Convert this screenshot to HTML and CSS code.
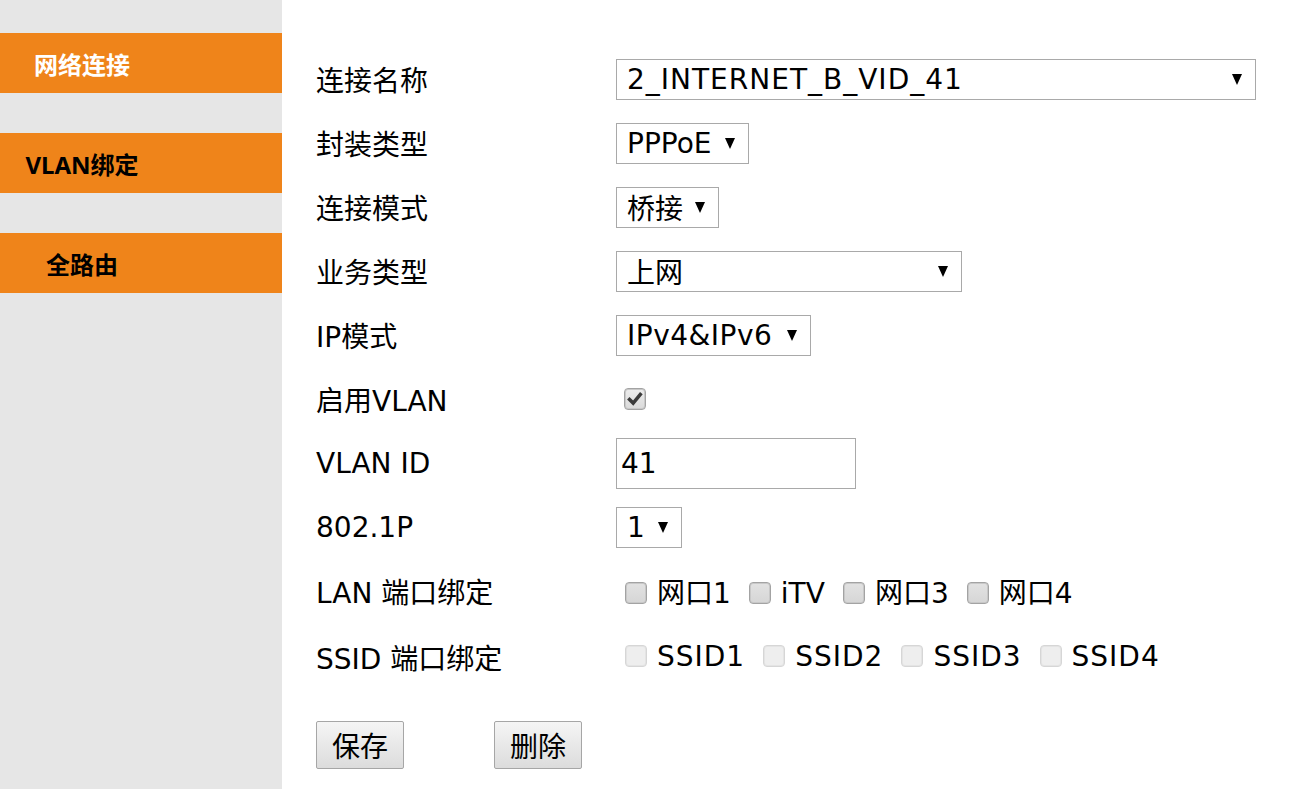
FILE: index.html
```html
<!DOCTYPE html>
<html lang="zh-CN">
<head>
<meta charset="utf-8">
<title>网络连接</title>
<link rel="stylesheet" href="styles.css">
</head>
<body>
<div class="page">
  <aside class="sidebar">
    <a class="nav-item nav-active" href="#"><span class="nav-text">网络连接</span></a>
    <a class="nav-item" href="#"><span class="nav-text">VLAN绑定</span></a>
    <a class="nav-item" href="#"><span class="nav-text">全路由</span></a>
  </aside>
  <main class="content">
    <form class="form">
      <div class="row">
        <span class="label">连接名称</span>
        <span class="select w-name"><span>2_INTERNET_B_VID_41</span></span>
      </div>
      <div class="row">
        <span class="label">封装类型</span>
        <span class="select w-mode"><span>PPPoE</span></span>
      </div>
      <div class="row">
        <span class="label">连接模式</span>
        <span class="select w-bridge"><span>桥接</span></span>
      </div>
      <div class="row">
        <span class="label">业务类型</span>
        <span class="select w-service"><span>上网</span></span>
      </div>
      <div class="row">
        <span class="label">IP模式</span>
        <span class="select w-ip"><span>IPv4&amp;IPv6</span></span>
      </div>
      <div class="row">
        <span class="label">启用VLAN</span>
        <span class="cb cb-checked cb-solo">
          <svg viewBox="0 0 22 22" width="22" height="22"><path d="M5 11.5 L9 15.5 L16.8 6" fill="none" stroke="#3a3a3a" stroke-width="3.8" stroke-linecap="square"/></svg>
        </span>
      </div>
      <div class="row">
        <span class="label">VLAN ID</span>
        <span class="text-input">41</span>
      </div>
      <div class="row">
        <span class="label">802.1P</span>
        <span class="select w-prio"><span>1</span></span>
      </div>
      <div class="row">
        <span class="label">LAN 端口绑定</span>
        <span class="check-group lan-group"><span class="cb-item"><span class="cb"></span>网口1</span><span class="cb-item"><span class="cb"></span>iTV</span><span class="cb-item"><span class="cb"></span>网口3</span><span class="cb-item"><span class="cb"></span>网口4</span></span>
      </div>
      <div class="row row-ssid">
        <span class="label">SSID 端口绑定</span>
        <span class="check-group ssid-group"><span class="cb-item"><span class="cb cb-disabled"></span>SSID1</span><span class="cb-item"><span class="cb cb-disabled"></span>SSID2</span><span class="cb-item"><span class="cb cb-disabled"></span>SSID3</span><span class="cb-item"><span class="cb cb-disabled"></span>SSID4</span></span>
      </div>
      <div class="actions">
        <button type="button" class="btn">保存</button>
        <button type="button" class="btn">删除</button>
      </div>
    </form>
  </main>
</div>
</body>
</html>
```
FILE: styles.css
```css
html, body {
  margin: 0;
  padding: 0;
  height: 100%;
  background: #ffffff;
}

.page {
  display: flex;
  height: 789px;
  overflow: hidden;
}

.sidebar {
  width: 282px;
  flex: none;
  background: #e6e6e6;
  padding-top: 33px;
  display: flex;
  flex-direction: column;
  gap: 40px;
}

.nav-item {
  display: flex;
  align-items: center;
  height: 60px;
  background: #ef841a;
  text-decoration: none;
  color: #000000;
  font-family: "Noto Sans", "Noto Sans CJK SC", sans-serif;
  font-weight: 700;
  font-size: 24px;
}

.nav-active {
  color: #ffffff;
}

.nav-text {
  width: 164px;
  text-align: center;
}

.content {
  flex: 1;
  padding-left: 34px;
  font-family: "DejaVu Sans", "Noto Sans CJK SC", sans-serif;
  font-size: 28px;
  color: #000000;
}

.form {
  padding-top: 47px;
}

.row {
  display: flex;
  align-items: center;
  height: 64px;
}

.row-ssid {
  padding-top: 3px;
  box-sizing: border-box;
}

.label {
  width: 300px;
  flex: none;
  white-space: nowrap;
}

.select {
  box-sizing: border-box;
  display: flex;
  align-items: center;
  justify-content: space-between;
  height: 41px;
  padding: 0 13px 0 10px;
  border: 1px solid #a9a9a9;
  background: #ffffff;
  white-space: nowrap;
}

.select::after {
  content: "";
  width: 0;
  height: 0;
  border-left: 5.5px solid transparent;
  border-right: 5.5px solid transparent;
  border-top: 11px solid #000000;
}

.w-name { width: 640px; letter-spacing: 1px; }
.w-mode { width: 133px; }
.w-bridge { width: 103px; }
.w-service { width: 346px; }
.w-ip { width: 195px; letter-spacing: 0.5px; }
.w-prio { width: 66px; }

.text-input {
  box-sizing: border-box;
  display: flex;
  align-items: center;
  width: 240px;
  height: 51px;
  padding-left: 4px;
  border: 1px solid #a9a9a9;
}

.cb {
  box-sizing: border-box;
  display: inline-flex;
  align-items: center;
  justify-content: center;
  width: 22px;
  height: 22px;
  border: 1px solid #a3a3a3;
  border-radius: 4px;
  box-shadow: inset 0 0 0 1px #c8c8c8;
  background: linear-gradient(#e2e2e2, #d6d6d6);
  flex: none;
}

.cb-solo {
  margin-left: 8px;
}

.cb-checked {
  background: linear-gradient(#ececec, #dadada);
}

.cb-disabled {
  border-color: #d6d6d6;
  box-shadow: inset 0 0 0 1px #e4e4e4;
  background: #eeeeee;
}

.check-group {
  display: block;
  white-space: nowrap;
}

.cb-item {
  margin-right: 9px;
}

.check-group .cb {
  display: inline-block;
  vertical-align: -1px;
  margin-left: 9px;
  margin-right: 10px;
}

.ssid-group .cb-item {
  letter-spacing: 1px;
}

.actions {
  display: flex;
  gap: 90px;
  margin-top: 34px;
}

.btn {
  box-sizing: border-box;
  width: 88px;
  height: 48px;
  padding: 0;
  border: 1px solid #a6a6a6;
  border-radius: 2px;
  background: linear-gradient(#f5f5f5, #dcdcdc);
  font-family: "DejaVu Sans", "Noto Sans CJK SC", sans-serif;
  font-size: 28px;
  color: #000000;
}
```
